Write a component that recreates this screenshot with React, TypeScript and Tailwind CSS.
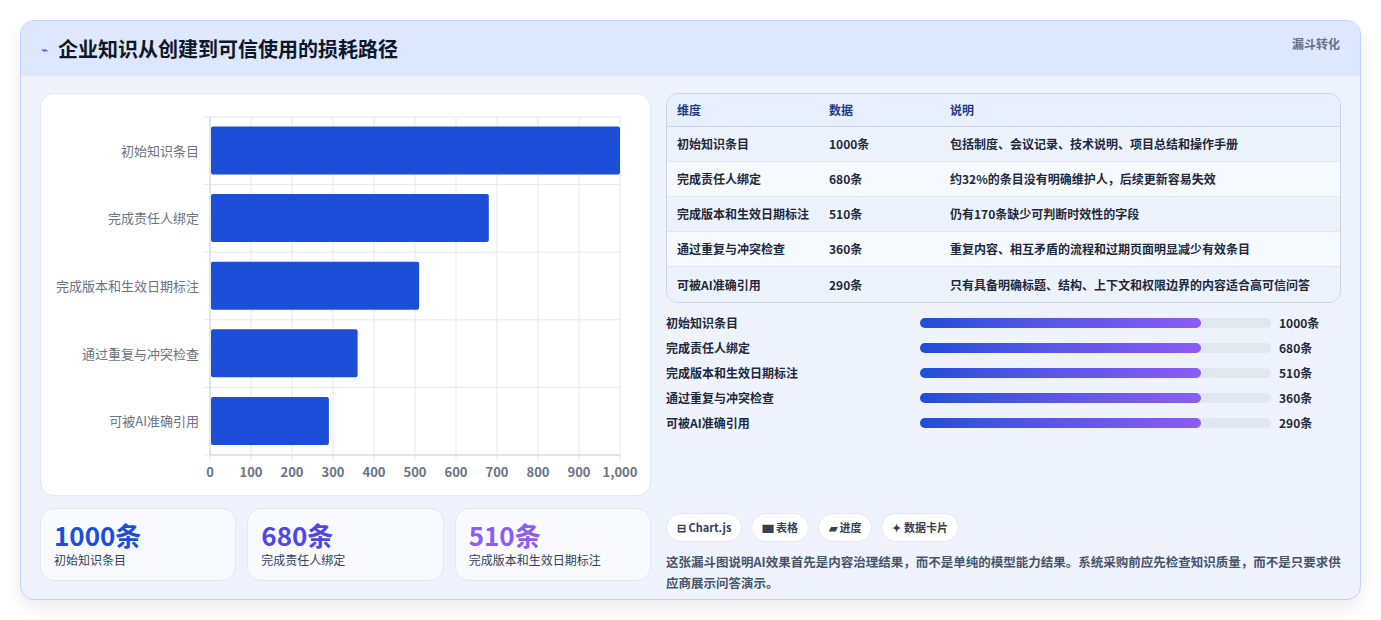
import React from "react";

const rows = [
  ["初始知识条目", 1000, "包括制度、会议记录、技术说明、项目总结和操作手册"],
  ["完成责任人绑定", 680, "约32%的条目没有明确维护人，后续更新容易失效"],
  ["完成版本和生效日期标注", 510, "仍有170条缺少可判断时效性的字段"],
  ["通过重复与冲突检查", 360, "重复内容、相互矛盾的流程和过期页面明显减少有效条目"],
  ["可被AI准确引用", 290, "只有具备明确标题、结构、上下文和权限边界的内容适合高可信问答"],
] as const;

const font = { fontFamily: '"Noto Sans CJK SC", "Noto Sans", sans-serif' };

function Chart() {
  const L = 169, R = 579, T = 23, B = 361;
  const rh = (B - T) / 5;
  const sx = (v: number) => L + (v / 1000) * (R - L);
  return (
    <svg width="610" height="402" style={font}>
      {Array.from({ length: 11 }).map((_, i) => (
        <g key={i}>
          <line x1={sx(i * 100)} x2={sx(i * 100)} y1={T} y2={B + 6} stroke="#e5e7eb" />
          <text x={sx(i * 100)} y={383} fontSize="13" fill="#6b7280" textAnchor="middle" fontWeight="600">
            {i === 10 ? "1,000" : i * 100}
          </text>
        </g>
      ))}
      {Array.from({ length: 6 }).map((_, i) => (
        <line key={i} x1={L - 6} x2={R} y1={T + i * rh} y2={T + i * rh} stroke="#e5e7eb" />
      ))}
      <line x1={L} x2={L} y1={T} y2={B} stroke="#d1d5db" />
      <line x1={L} x2={R} y1={B} y2={B} stroke="#d1d5db" />
      {rows.map(([n, v], i) => (
        <g key={n}>
          <rect x={L + 1} y={T + i * rh + 9.5} width={sx(v) - L - 1} height={48} rx="2" fill="#1d4ed8" />
          <text x={158} y={T + i * rh + rh / 2 + 5} fontSize="13" fill="#6b7280" textAnchor="end">{n}</text>
        </g>
      ))}
    </svg>
  );
}

export default function App() {
  return (
    <div className="w-[1381px] h-[620px] bg-white pt-[20px] px-[20px]" style={font}>
      <div className="w-[1341px] h-[580px] rounded-[14px] border border-[#c7d2fe] bg-[#eef3fd] overflow-hidden shadow-[0_8px_20px_rgba(0,0,0,0.08)]">
        <div className="h-[55px] bg-[#dde7fd] flex items-center justify-between pl-[20px] pr-[20px]">
          <div className="flex items-center gap-[10px]">
            <span className="text-[#4f46e5] text-[12px]">⌁</span>
            <span className="text-[20px] font-bold text-[#0f172a]">企业知识从创建到可信使用的损耗路径</span>
          </div>
          <span className="text-[12px] font-bold text-[#64748b] self-start mt-[14px]">漏斗转化</span>
        </div>
        <div className="flex gap-[15px] px-[19px] pt-[17px]">
          <div className="w-[611px] flex flex-col gap-[12px]">
            <div className="h-[403px] bg-white rounded-[14px] border border-[#e2e8f0]">
              <Chart />
            </div>
            <div className="flex gap-[11px]">
              {[["1000条", "初始知识条目", "text-[#1d4ed8]"], ["680条", "完成责任人绑定", "text-[#4f46e5]"], ["510条", "完成版本和生效日期标注", "text-[#8b5cf6]"]].map(([a, b, c]) => (
                <div key={a} className="flex-1 h-[73px] bg-[#f8faff] rounded-[14px] border border-[#e2e8f0] px-[13px] pt-[9px]">
                  <div className={`text-[26px] font-bold leading-[34px] ${c}`}>{a}</div>
                  <div className="text-[12px] text-[#334155] leading-[16px]">{b}</div>
                </div>
              ))}
            </div>
          </div>
          <div className="w-[676px] flex flex-col">
            <div className="rounded-[12px] border border-[#cbd5e1] overflow-hidden text-[12px]">
              <div className="flex h-[33px] items-center bg-[#e8efff] font-bold text-[#1e3a8a] border-b border-[#cbd5e1]">
                <div className="w-[162px] pl-[10px]">维度</div>
                <div className="w-[121px]">数据</div>
                <div className="flex-1">说明</div>
              </div>
              {rows.map(([n, v, d], i) => (
                <div key={n} className={`flex h-[35px] items-center font-semibold text-[#1e293b] ${i % 2 ? "bg-[#f6f9fe]" : "bg-[#edf3fd]"} ${i < 4 ? "border-b border-[#e2e8f0]" : ""}`}>
                  <div className="w-[162px] pl-[10px]">{n}</div>
                  <div className="w-[121px]">{v}条</div>
                  <div className="flex-1">{d}</div>
                </div>
              ))}
            </div>
            <div className="flex flex-col gap-[9px] mt-[12px]">
              {rows.map(([n, v]) => (
                <div key={n} className="flex items-center h-[16px] text-[12px] font-semibold text-[#1e293b]">
                  <div className="w-[254px]">{n}</div>
                  <div className="w-[351px] h-[10px] rounded-full bg-[#e2e8f0]">
                    <div className="h-full w-[80%] rounded-full bg-gradient-to-r from-[#1d4ed8] to-[#8b5cf6]" />
                  </div>
                  <div className="ml-[8px] font-bold">{v}条</div>
                </div>
              ))}
            </div>
            <div className="flex gap-[9px] mt-[82px] text-[11px] font-bold text-[#334155]">
              {["⊟ Chart.js", "▆ 表格", "▰ 进度", "✦ 数据卡片"].map(t => (
                <div key={t} className="h-[29px] px-[10px] flex items-center bg-white rounded-full border border-[#e2e8f0]">{t}</div>
              ))}
            </div>
            <div className="mt-[9px] text-[12.5px] leading-[21px] text-[#475569] font-semibold">
              这张漏斗图说明AI效果首先是内容治理结果，而不是单纯的模型能力结果。系统采购前应先检查知识质量，而不是只要求供应商展示问答演示。
            </div>
          </div>
        </div>
      </div>
    </div>
  );
}
